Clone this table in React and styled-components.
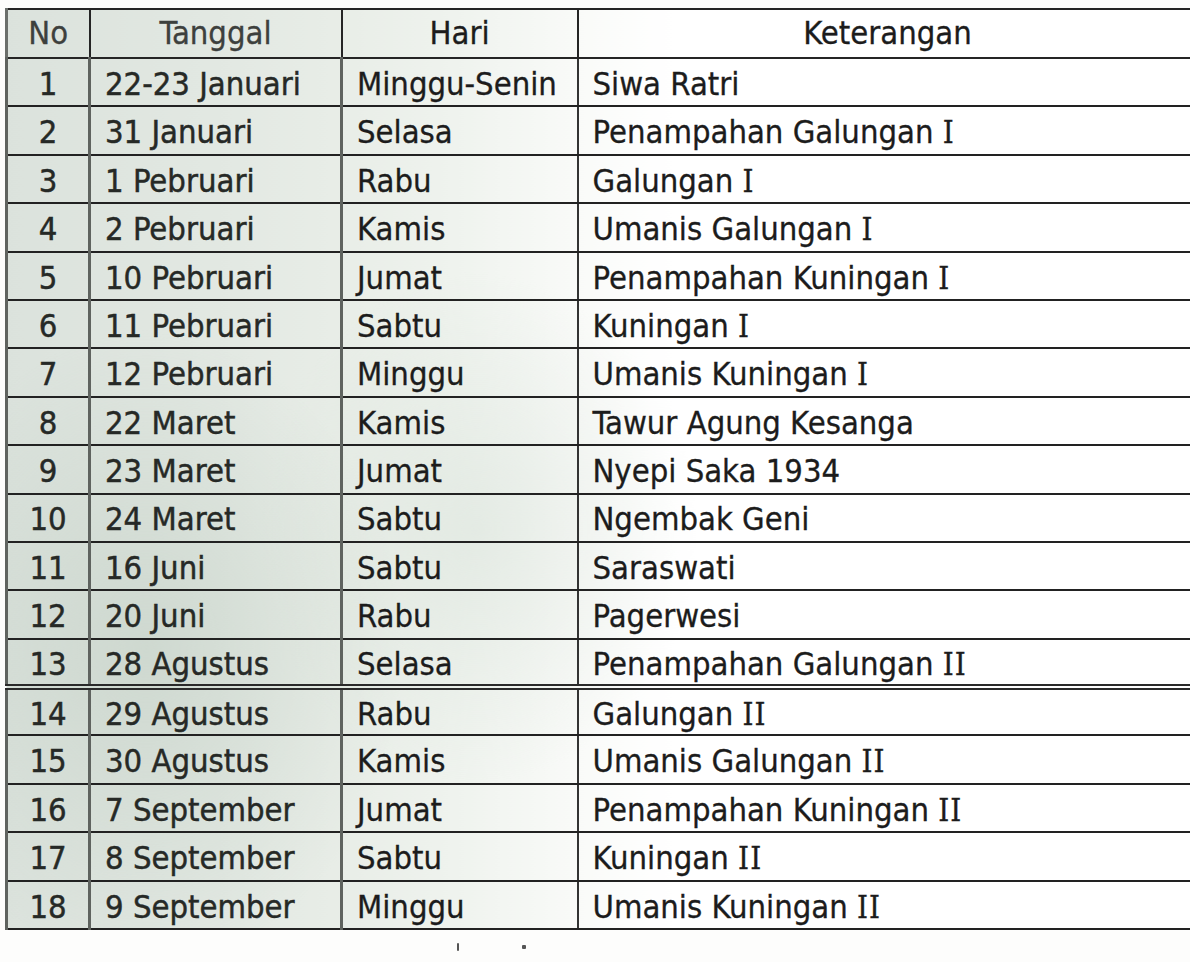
import React from "react";
import styled, { createGlobalStyle } from "styled-components";

const Global = createGlobalStyle`
  html, body { margin: 0; padding: 0; background: #fdfdfc; overflow: hidden; }
  body { width: 1190px; height: 962px; }
`;

const Page = styled.div`
  width: 1190px;
  height: 962px;
  overflow: hidden;
  padding: 8px 0 0 5px;
  box-sizing: border-box;
`;

const Table = styled.table`
  width: 1190px;
  border-collapse: collapse;
  table-layout: fixed;
  font-family: "DejaVu Sans Condensed", "DejaVu Sans", sans-serif;
  font-size: 32.5px;
  color: #1c1c1c;
  background:
    radial-gradient(ellipse 260px 320px at 140px 640px, rgba(185, 200, 188, 0.45), rgba(185, 200, 188, 0) 100%),
    radial-gradient(ellipse 220px 260px at 470px 520px, rgba(215, 225, 216, 0.5), rgba(215, 225, 216, 0) 100%),
    linear-gradient(90deg, #dbe2dc 0%, #e2e8e2 18%, #e8ede7 28%, #eff3ee 38%, #f9faf8 48%, #ffffff 56%);
  border-left: 3px solid #6b6f6b;
`;

const Col = styled.col`
  width: ${(p) => p.$w}px;
`;

const HeadCell = styled.th`
  height: 47px;
  padding: 0;
  font-weight: normal;
  text-align: center;
  color: ${(p) => (p.$dim ? "#3d403d" : "#1c1c1c")};
  -webkit-text-stroke: 0.3px currentColor;
  border: 2px solid #252525;
  border-left-color: ${(p) => (p.$first ? "#6b6f6b" : "#3a3a3a")};
  border-right-width: ${(p) => (p.$last ? 0 : 2)}px;
  line-height: 1;
  vertical-align: middle;
`;

const Cell = styled.td`
  height: 48.4px;
  padding: 4px 0 0 ${(p) => (p.$center ? 0 : 14)}px;
  box-sizing: border-box;
  text-align: ${(p) => (p.$center ? "center" : "left")};
  white-space: nowrap;
  overflow: hidden;
  line-height: 1;
  vertical-align: middle;
  color: ${(p) => (p.$dim ? "#262926" : "#1c1c1c")};
  -webkit-text-stroke: ${(p) => (p.$dim ? 0.45 : 0.3)}px currentColor;
  border-top: 2px solid #222;
  border-bottom: ${(p) => (p.$double ? "6px double #2a2a2a" : "2px solid #222")};
  border-left: ${(p) => (p.$thickLeft ? "3px solid #5f635f" : "2px solid #333")};
  border-right-width: ${(p) => (p.$last ? 0 : 2)}px;
`;

const Roman = styled.span`
  font-family: "DejaVu Serif Condensed", "DejaVu Serif", serif;
  font-size: 31px;
  letter-spacing: 1px;
`;

const Speck = styled.span`
  position: absolute;
  width: ${(p) => p.$w}px;
  height: ${(p) => p.$h}px;
  left: ${(p) => p.$x}px;
  top: ${(p) => p.$y}px;
  background: #555;
  border-radius: 1px;
`;

const Wrap = styled.div`
  position: relative;
`;

const rows = [
  ["1", "22-23 Januari", "Minggu-Senin", "Siwa Ratri"],
  ["2", "31 Januari", "Selasa", "Penampahan Galungan I"],
  ["3", "1 Pebruari", "Rabu", "Galungan I"],
  ["4", "2 Pebruari", "Kamis", "Umanis Galungan I"],
  ["5", "10 Pebruari", "Jumat", "Penampahan Kuningan I"],
  ["6", "11 Pebruari", "Sabtu", "Kuningan I"],
  ["7", "12 Pebruari", "Minggu", "Umanis Kuningan I"],
  ["8", "22 Maret", "Kamis", "Tawur Agung Kesanga"],
  ["9", "23 Maret", "Jumat", "Nyepi Saka 1934"],
  ["10", "24 Maret", "Sabtu", "Ngembak Geni"],
  ["11", "16 Juni", "Sabtu", "Saraswati"],
  ["12", "20 Juni", "Rabu", "Pagerwesi"],
  ["13", "28 Agustus", "Selasa", "Penampahan Galungan II"],
  ["14", "29 Agustus", "Rabu", "Galungan II"],
  ["15", "30 Agustus", "Kamis", "Umanis Galungan II"],
  ["16", "7 September", "Jumat", "Penampahan Kuningan II"],
  ["17", "8 September", "Sabtu", "Kuningan II"],
  ["18", "9 September", "Minggu", "Umanis Kuningan II"],
];

function withRoman(text) {
  const m = text.match(/^(.*) (I+)$/);
  if (!m) return text;
  return (
    <>
      {m[1]} <Roman>{m[2]}</Roman>
    </>
  );
}

export default function App() {
  return (
    <>
      <Global />
      <Page>
        <Wrap>
          <Table>
            <colgroup>
              <Col $w={83} />
              <Col $w={252} />
              <Col $w={236} />
              <Col $w={619} />
            </colgroup>
            <thead>
              <tr>
                <HeadCell $first $dim>No</HeadCell>
                <HeadCell $dim>Tanggal</HeadCell>
                <HeadCell>Hari</HeadCell>
                <HeadCell $last>Keterangan</HeadCell>
              </tr>
            </thead>
            <tbody>
              {rows.map(([no, date, day, note]) => (
                <tr key={no}>
                  <Cell $center $dim $thickLeft $double={no === "13"}>{no}</Cell>
                  <Cell $dim $thickLeft $double={no === "13"}>{date}</Cell>
                  <Cell $thickLeft $double={no === "13"}>{day}</Cell>
                  <Cell $last $double={no === "13"}>{withRoman(note)}</Cell>
                </tr>
              ))}
            </tbody>
          </Table>
          <Speck $x={452} $y={935} $w={2} $h={8} />
          <Speck $x={517} $y={937} $w={4} $h={4} />
        </Wrap>
      </Page>
    </>
  );
}
